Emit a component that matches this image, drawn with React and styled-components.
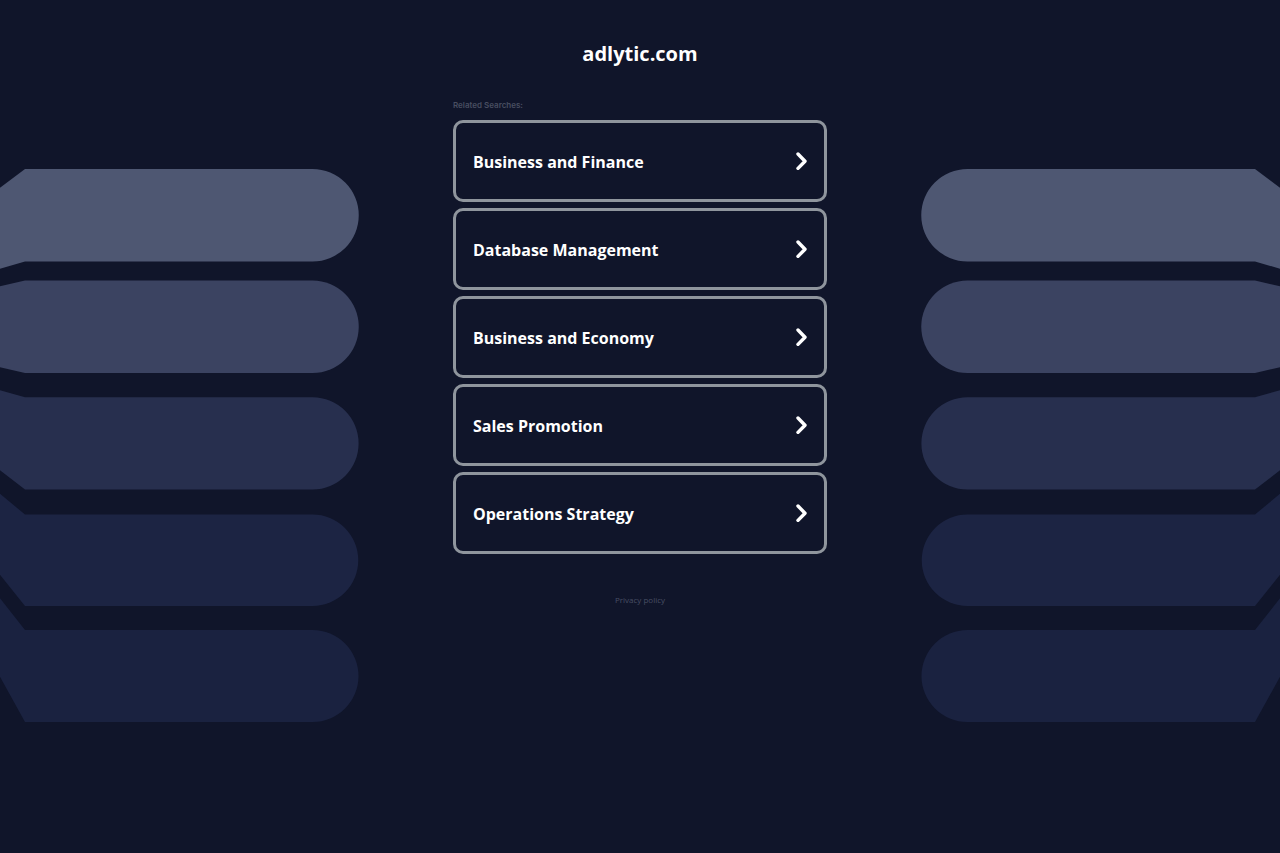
import React from "react";
import styled, { createGlobalStyle } from "styled-components";

const GlobalStyle = createGlobalStyle`
  *, *::before, *::after { box-sizing: border-box; }
  body {
    margin: 0;
    background: #10152a;
    color: #fff;
    font-family: "Open Sans", "Noto Sans", sans-serif;
  }
`;

const Page = styled.div`
  position: relative;
  display: flex;
  flex-direction: column;
  align-items: center;
  min-height: 100vh;
  padding: 39px 16px;
  overflow: hidden;
`;

const Backdrop = styled.svg`
  position: absolute;
  top: 0;
  left: 50%;
  width: 1280px;
  height: 853px;
  margin-left: -640px;
  pointer-events: none;
`;

const Title = styled.h1`
  position: relative;
  margin: 0 0 31px;
  font-size: 20px;
  line-height: 30px;
  font-weight: 700;
`;

const Searches = styled.section`
  position: relative;
  width: 100%;
  max-width: 374px;
`;

const Heading = styled.h2`
  margin: 0 0 10px;
  color: #484e61;
  font-family: Inter, "Open Sans", sans-serif;
  font-size: 8px;
  line-height: 10px;
  font-weight: 600;
`;

const List = styled.ul`
  display: flex;
  flex-direction: column;
  gap: 6px;
  margin: 0;
  padding: 0;
  list-style: none;
`;

const SearchLink = styled.a`
  display: flex;
  align-items: center;
  justify-content: space-between;
  height: 82px;
  padding: 0 16px 0 17px;
  border: 3px solid #8f959d;
  border-radius: 10px;
  color: #fff;
  text-decoration: none;
`;

const Label = styled.span`
  padding-top: 2px;
  font-size: 16px;
  line-height: 22px;
  font-weight: 700;
`;

const Chevron = styled.svg`
  flex: none;
  width: 12px;
  height: 18px;
`;

const Footer = styled.footer`
  position: relative;
  margin-top: 40px;
  font-size: 8px;
  line-height: 12px;
`;

const PolicyLink = styled.a`
  color: #484e64;
  text-decoration: none;
`;

const searches = [
  "Business and Finance",
  "Database Management",
  "Business and Economy",
  "Sales Promotion",
  "Operations Strategy",
];

const bands = [
  { fill: "#4e5772", d: "M-1 188.500L25 169H312.500A46 46 0 0 1 312.500 261.500H25L-1 269Z" },
  { fill: "#3b4361", d: "M-1 286.500L25 280.500H312.500A46 46 0 0 1 312.500 373H25L-1 367Z" },
  { fill: "#272f4e", d: "M-1 390L25 397.300H312.500A46 46 0 0 1 312.500 489.500H25L-1 469.500Z" },
  { fill: "#1c2443", d: "M-1 493L25 514.500H312.500A45.700 45.700 0 0 1 312.500 606H25L-1 573.500Z" },
  { fill: "#1a2240", d: "M-1 597L25 630H312.500A46 46 0 0 1 312.500 722H25L-1 675Z" },
];

function Bands() {
  return bands.map((band) => <path key={band.fill} d={band.d} fill={band.fill} />);
}

export default function App() {
  return (
    <>
      <GlobalStyle />
      <Page>
        <Backdrop viewBox="0 0 1280 853" aria-hidden="true">
          <Bands />
          <g transform="translate(1280 0) scale(-1 1)">
            <Bands />
          </g>
        </Backdrop>
        <Title>adlytic.com</Title>
        <Searches>
          <Heading>Related Searches:</Heading>
          <List>
            {searches.map((name) => (
              <li key={name}>
                <SearchLink href="#">
                  <Label>{name}</Label>
                  <Chevron viewBox="0 0 12 18" fill="none" aria-hidden="true">
                    <path d="M2 2L9 9.200L2 16.400" stroke="#fff" strokeWidth="3.400" strokeLinecap="round" strokeLinejoin="round" />
                  </Chevron>
                </SearchLink>
              </li>
            ))}
          </List>
        </Searches>
        <Footer>
          <PolicyLink href="#">Privacy policy</PolicyLink>
        </Footer>
      </Page>
    </>
  );
}
